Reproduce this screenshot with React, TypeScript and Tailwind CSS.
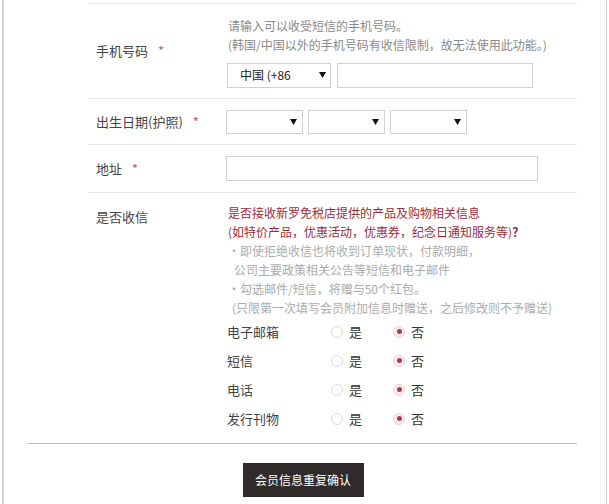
import React from 'react';

const font = { fontFamily: '"Noto Sans CJK SC", "Noto Sans", sans-serif' };

const Arrow: React.FC = () => (
  <svg width="7" height="6" viewBox="0 0 7 6" className="shrink-0">
    <polygon points="0,0 7,0 3.5,6" fill="#111" />
  </svg>
);

const Star: React.FC = () => <span className="ml-[10px] text-[13px] text-[#c0607a]">*</span>;

const Label: React.FC<{ text: string; required?: boolean }> = ({ text, required }) => (
  <div className="w-[138px] shrink-0 pl-2 text-[13px] text-[#444]">
    {text}
    {required && <Star />}
  </div>
);

const Radio: React.FC<{ checked?: boolean; label: string }> = ({ checked, label }) => (
  <div className="flex items-center gap-[6px]">
    {checked ? (
      <span className="flex h-[12px] w-[12px] items-center justify-center rounded-full border border-[#f1cdd4] bg-[#fbeef1]">
        <span className="h-[5px] w-[5px] rounded-full bg-[#a5404f]" />
      </span>
    ) : (
      <span className="h-[12px] w-[12px] rounded-full border border-[#dadada] bg-white" />
    )}
    <span className="text-[13px] text-[#333]">{label}</span>
  </div>
);

const channels = ['电子邮箱', '短信', '电话', '发行刊物'];

export default function App() {
  return (
    <div className="h-[504px] w-[609px] overflow-hidden bg-white" style={font}>
      <div className="ml-[2px] h-full w-[605px] border-l-2 border-r border-[#d4d4d4]">
        <div className="h-full w-[597px] border-r border-[#f3f3f3] pt-[3px]">
          <div className="ml-[84px] w-[489px]">
            {/* phone */}
            <div className="flex h-[95px] items-center border-t border-[#e4e4e4]">
              <Label text="手机号码" required />
              <div className="pt-[1px]">
                <div className="text-[12px] leading-[19px] text-[#8a8a8a]">
                  <div className="pl-[2px]">请输入可以收受短信的手机号码。</div>
                  <div className="pl-[2px]">(韩国/中国以外的手机号码有收信限制，故无法使用此功能。)</div>
                </div>
                <div className="mt-[9px] flex gap-[6px] pl-[1px]">
                  <div className="flex h-[25px] w-[104px] items-center justify-between border border-[#d0d0d0] pl-[12px] pr-[4px] text-[12px] text-[#222]">
                    <span>中国 (+86</span>
                    <Arrow />
                  </div>
                  <div className="h-[25px] w-[196px] border border-[#d0d0d0]" />
                </div>
              </div>
            </div>

            {/* birthday */}
            <div className="flex h-[46px] items-center border-t border-[#e4e4e4]">
              <Label text="出生日期(护照)" required />
              <div className="flex gap-[5px]">
                {[0, 1, 2].map((i) => (
                  <div key={i} className="flex h-[24px] w-[77px] items-center justify-end border border-[#d0d0d0] pr-[5px]">
                    <Arrow />
                  </div>
                ))}
              </div>
            </div>

            {/* address */}
            <div className="flex h-[48px] items-center border-t border-[#e4e4e4]">
              <Label text="地址" required />
              <div className="h-[25px] w-[312px] border border-[#d0d0d0]" />
            </div>

            {/* newsletter */}
            <div className="flex border-t border-[#e4e4e4] pt-[10px]">
              <div className="w-[138px] shrink-0 pl-2 pt-[4px] text-[13px] text-[#444]">是否收信</div>
              <div>
                <div className="pl-[2px] text-[12px] leading-[19px] text-[#9c2c3d]">
                  <div>是否接收新罗免税店提供的产品及购物相关信息</div>
                  <div>
                    (如特价产品，优惠活动，优惠券，纪念日通知服务等)<span className="font-bold">？</span>
                  </div>
                </div>
                <div className="pl-[2px] text-[12px] leading-[19px] text-[#ababab]">
                  <div>•即使拒绝收信也将收到订单现状，付款明细，</div>
                  <div className="pl-[6px]">公司主要政策相关公告等短信和电子邮件</div>
                  <div>•勾选邮件/短信，将赠与50个红包。</div>
                  <div className="pl-[4px]">(只限第一次填写会员附加信息时赠送，之后修改则不予赠送)</div>
                </div>
                <div className="pl-[1px]">
                  {channels.map((c) => (
                    <div key={c} className="flex h-[29px] items-center">
                      <div className="w-[104px] text-[13px] text-[#444]">{c}</div>
                      <Radio label="是" />
                      <div className="w-[31px]" />
                      <Radio checked label="否" />
                    </div>
                  ))}
                </div>
              </div>
            </div>
          </div>

          <div className="ml-[24px] mt-[10px] w-[549px] border-t border-[#bdbdbd]" />

          <div className="mt-[19px] flex justify-center pl-[2px]">
            <button className="h-[34px] w-[121px] bg-[#302b2b] text-[12px] text-white">会员信息重复确认</button>
          </div>
        </div>
      </div>
    </div>
  );
}
